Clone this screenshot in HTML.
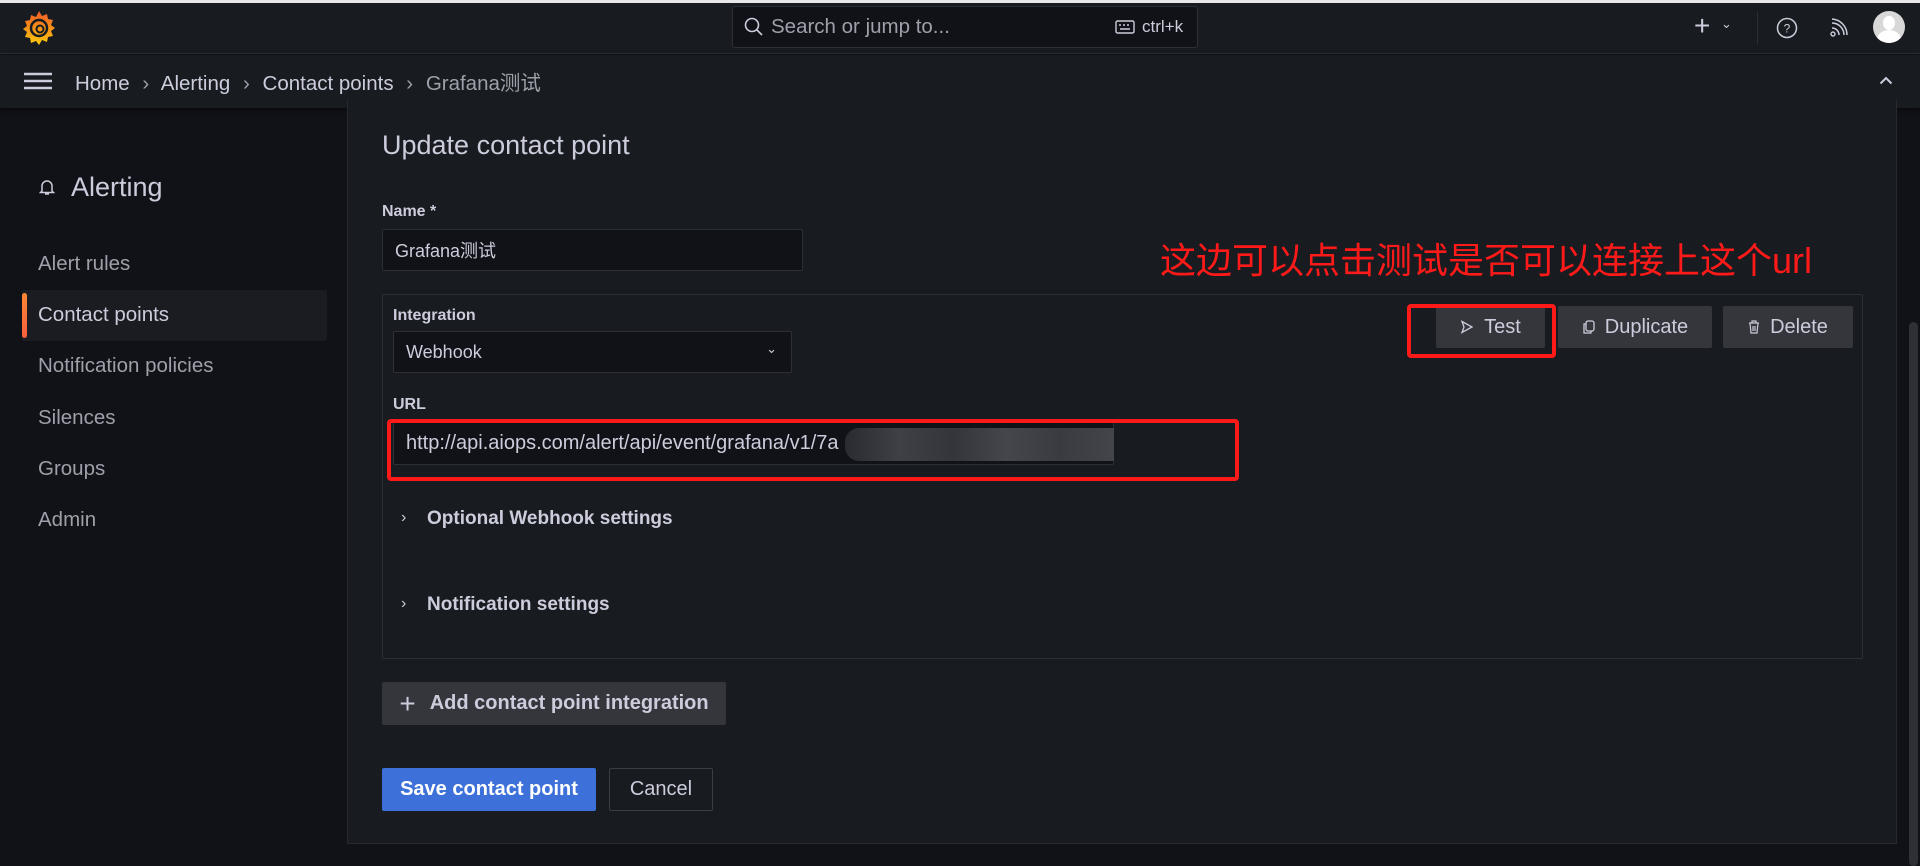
<!DOCTYPE html>
<html><head><meta charset="utf-8"><style>
*{box-sizing:border-box;margin:0;padding:0}
body{width:1920px;height:866px;overflow:hidden;background:#111217;font-family:"Liberation Sans","Noto Sans CJK SC",sans-serif;color:#ccccdc;position:relative}
.a{position:absolute}
.t{white-space:nowrap}
.btn{position:absolute;background:#34363c;border-radius:2px;color:#ccccdc;font-size:20px;display:flex;align-items:center;justify-content:center;gap:10px}
.inp{position:absolute;background:#111217;border:1px solid #2c2f36;border-radius:2px;font-size:18px;display:flex;align-items:center;padding-left:12px;color:#ccccdc}
.lbl{position:absolute;font-size:16px;font-weight:bold;color:#ccccdc}
.nav{position:absolute;left:38px;font-size:20.5px;color:#9da0aa}
</style></head><body>
<div class="a" style="left:0;top:0;width:1920px;height:3px;background:#e8e8e8"></div>
<div class="a" style="left:0;top:3px;width:1920px;height:51px;background:#181b1f;border-bottom:1px solid #2a2d33"></div>
<svg class="a" style="left:22px;top:10px" width="34" height="35" viewBox="0 0 34 35"><defs><linearGradient id="g" x1="0" y1="0" x2="0" y2="1"><stop offset="0" stop-color="#f05a28"/><stop offset="1" stop-color="#fbca0a"/></linearGradient></defs><path d="M17 1l3 5 5-2 1 5 5 1-2 5 4 3-4 3 2 5-5 1-1 5-5-2-3 5-3-4-5 2-1-5-5-1 2-5-4-3 4-3-2-5 5-1 1-5 5 2z" fill="url(#g)"/><circle cx="17" cy="18" r="8" fill="none" stroke="#181b1f" stroke-width="2.5"/><circle cx="18" cy="19" r="3.5" fill="none" stroke="#181b1f" stroke-width="2"/></svg>
<div class="a" style="left:732px;top:6px;width:466px;height:42px;background:#111217;border:1px solid #2c2f36;border-radius:3px"></div>
<svg class="a" style="left:744px;top:17px" width="20" height="20" viewBox="0 0 20 20"><circle cx="8" cy="8" r="6.5" fill="none" stroke="#ccccdc" stroke-width="1.6"/><path d="M13 13l5 5" stroke="#ccccdc" stroke-width="1.6"/></svg>
<div class="a t" style="left:771px;top:15px;font-size:20.5px;color:#9da0aa">Search or jump to...</div>
<svg class="a" style="left:1115px;top:20px" width="20" height="14" viewBox="0 0 20 14"><rect x="1" y="1" width="18" height="12" rx="1.5" fill="none" stroke="#ccccdc" stroke-width="1.4"/><path d="M4 5h2M8 5h2M12 5h2M16 5h0M5 9h10" stroke="#ccccdc" stroke-width="1.4"/></svg>
<div class="a t" style="left:1142px;top:17px;font-size:17px;color:#ccccdc">ctrl+k</div>
<div class="a t" style="left:1694px;top:10px;font-size:28px;color:#ccccdc;font-weight:300">+</div>
<div class="a t" style="left:1721px;top:16px;font-size:13px;color:#ccccdc">⌄</div>
<div class="a" style="left:1757px;top:12px;width:1px;height:32px;background:#2c2f36"></div>
<svg class="a" style="left:1776px;top:17px" width="22" height="22" viewBox="0 0 22 22"><circle cx="11" cy="11" r="9.5" fill="none" stroke="#ccccdc" stroke-width="1.5"/><text x="11" y="15.5" font-size="12" text-anchor="middle" fill="#ccccdc" font-family="Liberation Sans">?</text></svg>
<svg class="a" style="left:1830px;top:18px" width="18" height="20" viewBox="0 0 18 20"><circle cx="3" cy="16" r="2" fill="none" stroke="#ccccdc" stroke-width="1.4"/><path d="M2 10a7 7 0 017 7M2 5a12 12 0 0112 12M2 1a16 16 0 0115 16" fill="none" stroke="#ccccdc" stroke-width="1.5"/></svg>
<div class="a" style="left:1873px;top:11px;width:32px;height:32px;border-radius:50%;background:#d8d8d8;overflow:hidden"><div class="a" style="left:10px;top:5px;width:12px;height:14px;border-radius:50%;background:#fff"></div><div class="a" style="left:4px;top:19px;width:24px;height:20px;border-radius:50% 50% 0 0;background:#fff"></div></div>
<div class="a" style="left:0;top:55px;width:1920px;height:53px;background:#181b1f;box-shadow:0 2px 4px rgba(0,0,0,.5)"></div>
<svg class="a" style="left:24px;top:72px" width="28" height="18" viewBox="0 0 28 18"><path d="M0 2h28M0 9h28M0 16h28" stroke="#ccccdc" stroke-width="2.4"/></svg>
<div class="a t" style="left:75px;top:66px;font-size:20.5px;color:#ccccdc">Home <span style="color:#9da0aa;margin:0 7px">›</span> Alerting <span style="color:#9da0aa;margin:0 7px">›</span> Contact points <span style="color:#9da0aa;margin:0 7px">›</span> <span style="color:#9da0aa">Grafana测试</span></div>
<svg class="a" style="left:1879px;top:76px" width="14" height="9" viewBox="0 0 14 9"><path d="M1.5 7.5L7 2l5.5 5.5" fill="none" stroke="#ccccdc" stroke-width="2"/></svg>

<svg class="a" style="left:39px;top:179px" width="16" height="17" viewBox="0 0 16 17"><path d="M3 12V7a5 5 0 0110 0v5l1.5 1.5h-13z M6 15h4" fill="none" stroke="#ccccdc" stroke-width="1.5"/></svg>
<div class="a t" style="left:71px;top:172px;font-size:27px;color:#ccccdc">Alerting</div>
<div class="nav t" style="top:252px">Alert rules</div>
<div class="a" style="left:22px;top:290px;width:305px;height:51px;background:#1b1c21;border-radius:2px"></div>
<div class="a" style="left:22px;top:293px;width:5px;height:45px;background:linear-gradient(#ff8833,#f55f3e);border-radius:3px"></div>
<div class="nav t" style="top:303px;color:#ccccdc">Contact points</div>
<div class="nav t" style="top:354px">Notification policies</div>
<div class="nav t" style="top:406px">Silences</div>
<div class="nav t" style="top:457px">Groups</div>
<div class="nav t" style="top:508px">Admin</div>

<div class="a" style="left:347px;top:100px;width:1550px;height:744px;background:#181b1f;border:1px solid #26292f;border-top:none"></div>
<div class="a t" style="left:382px;top:130px;font-size:27px;color:#ccccdc">Update contact point</div>
<div class="lbl t" style="left:382px;top:203px">Name *</div>
<div class="inp t" style="left:382px;top:229px;width:421px;height:42px">Grafana测试</div>
<div class="a t" style="left:1160px;top:232px;font-size:36px;color:#ff1a1a;font-family:'Liberation Sans','Noto Sans CJK SC',sans-serif">这边可以点击测试是否可以连接上这个url</div>
<div class="a" style="left:382px;top:294px;width:1481px;height:365px;border:1px solid #2c2f36;border-radius:2px"></div>
<div class="lbl t" style="left:393px;top:307px">Integration</div>
<div class="inp t" style="left:393px;top:331px;width:399px;height:42px">Webhook<span class="a" style="right:14px;top:9px;font-size:13px">⌄</span></div>
<div class="lbl t" style="left:393px;top:396px">URL</div>
<div class="inp t" style="left:393px;top:422px;width:721px;height:43px;font-size:20px">http://api.aiops.com/alert/api/event/grafana/v1/7a</div>
<div class="a" style="left:845px;top:428px;width:269px;height:33px;background:linear-gradient(90deg,#2a2b31,#3f4047,#34353b,#45464d,#3a3b41,#44454c);border-radius:14px 0 0 14px"></div>
<div class="a" style="left:387px;top:419px;width:852px;height:62px;border:4px solid #ff1a1a;border-radius:4px"></div>

<div class="btn t" style="left:1436px;top:306px;width:109px;height:42px"><svg width="14" height="14" viewBox="0 0 14 14"><path d="M2 1.5l10 5.5-10 5.5 2-5.5z" fill="none" stroke="#ccccdc" stroke-width="1.3"/></svg>Test</div>
<div class="a" style="left:1407px;top:304px;width:149px;height:54px;border:4px solid #ff1a1a;border-radius:4px"></div>
<div class="btn t" style="left:1558px;top:306px;width:154px;height:42px"><svg width="13" height="14" viewBox="0 0 13 14"><rect x="4" y="1" width="8" height="10" rx="2" fill="none" stroke="#ccccdc" stroke-width="1.3"/><path d="M4 4H2v9h7v-2" fill="none" stroke="#ccccdc" stroke-width="1.3"/></svg>Duplicate</div>
<div class="btn t" style="left:1723px;top:306px;width:130px;height:42px"><svg width="12" height="14" viewBox="0 0 12 14"><path d="M1 3h10M4 3V1h4v2M2 3l1 10h6l1-10M5 6v5M7 6v5" fill="none" stroke="#ccccdc" stroke-width="1.2"/></svg>Delete</div>

<div class="a t" style="left:401px;top:509px;font-size:16px;color:#ccccdc">›</div>
<div class="a t" style="left:427px;top:508px;font-size:19px;font-weight:bold;color:#ccccdc">Optional Webhook settings</div>
<div class="a t" style="left:401px;top:595px;font-size:16px;color:#ccccdc">›</div>
<div class="a t" style="left:427px;top:594px;font-size:19px;font-weight:bold;color:#ccccdc">Notification settings</div>

<div class="btn t" style="left:382px;top:682px;width:344px;height:43px;font-weight:bold;font-size:20px;gap:14px"><span style="font-size:28px;font-weight:300">+</span>Add contact point integration</div>
<div class="btn t" style="left:382px;top:768px;width:214px;height:43px;background:#3d71d9;color:#fff;font-weight:bold">Save contact point</div>
<div class="btn t" style="left:609px;top:768px;width:104px;height:43px;background:transparent;border:1px solid #3a3d44">Cancel</div>

<div class="a" style="left:1909px;top:322px;width:9px;height:544px;background:#2e3036;border-radius:5px"></div>
</body></html>
